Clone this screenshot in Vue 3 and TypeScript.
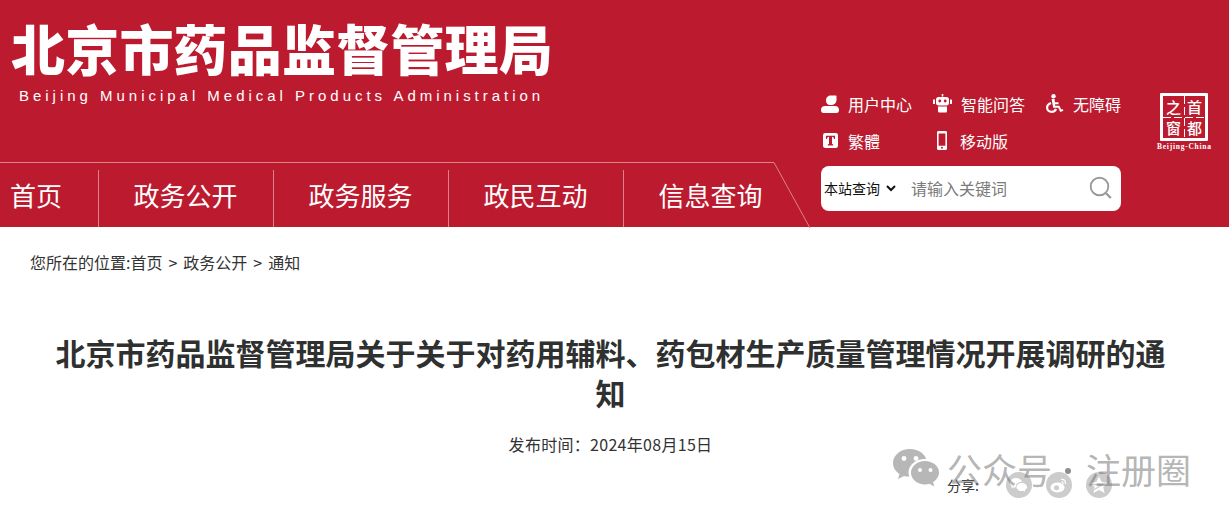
<script setup lang="ts">
const navItems: string[] = ['首页', '政务公开', '政务服务', '政民互动', '信息查询']
</script>

<template>
  <div class="page">
    <header class="header">
      <div class="brand-nav">
        <div class="brand">
          <div class="brand-cn">北京市药品监督管理局</div>
          <div class="brand-en">Beijing Municipal Medical Products Administration</div>
        </div>
        <nav class="nav">
          <svg class="nav-line" width="815" height="66" viewBox="0 0 815 66">
            <path d="M0 .5H774L810 66" fill="none" stroke="#d9838f" stroke-width="1" />
          </svg>
          <a v-for="item in navItems" :key="item" class="nav-item">{{ item }}</a>
        </nav>
      </div>
      <div class="tools-search">
        <div class="tools">
          <a class="tool">
            <svg class="tool-icon" width="18" height="18" viewBox="0 0 18 18"><path fill="#fff" d="M5 5.500C5 2.500 7 .5 10 .5h4.500c.8 0 1 .5 1 1.200V5c0 3-2.500 5-5.500 5H9C6.500 10 5 8 5 5.500ZM0 15c0-2.500 1.500-4 4-4h10c2.500 0 4 1.500 4 4 0 1.800-1 3-2.500 3h-13C1 18 0 16.800 0 15Z"/></svg>
            <span>用户中心</span>
          </a>
          <a class="tool">
            <svg class="tool-icon" width="19" height="19" viewBox="0 0 19 19"><path fill="#fff" d="M8.700 0h1.600v2.600H8.700zM5.500 3h8c1.500 0 2.500 1 2.500 2.500V9c0 1.500-1 2.500-2.500 2.500h-8C4 11.500 3 10.500 3 9V5.500C3 4 4 3 5.500 3ZM.5 5.500H2V10H.5C.2 10 0 9.700 0 9.300V6.200c0-.4.2-.7.500-.7Zm16.500 0h1.500c.3 0 .5.300.5.700v3.100c0 .4-.2.700-.5.700H17ZM5 12.500h9V17c0 1-.6 1.500-1.500 1.500h-6C5.600 18.500 5 18 5 17Z"/><circle cx="6.800" cy="7" r="1.400" fill="#bc1b2f"/><circle cx="12.200" cy="7" r="1.400" fill="#bc1b2f"/></svg>
            <span>智能问答</span>
          </a>
          <a class="tool">
            <svg class="tool-icon" width="18" height="19" viewBox="0 0 18 19"><circle cx="7.500" cy="2.200" r="2.200" fill="#fff"/><path fill="#fff" d="M5.600 5h3l.3 3.200h3.600v2H9l.2 1.500h4.200l1.800 3.800 1.400-.6.800 1.800-3.100 1.300-2.100-4.300H7.200Z"/><path fill="none" stroke="#fff" stroke-width="2.200" d="M5 9C2.500 9.900 1.100 11.600 1.100 13.500c0 2.700 2.100 4.400 4.500 4.400 2.100 0 3.800-1.200 4.400-3"/></svg>
            <span>无障碍</span>
          </a>
          <a class="tool">
            <svg class="tool-icon t-icon" width="15" height="15" viewBox="0 0 16 16"><rect width="16" height="16" rx="2.500" fill="#fff"/><path fill="#bc1b2f" d="M3.200 2.800h9.600v3.600h-1.100c-.2-1.500-.7-2.300-2.100-2.300v7.600l1.200.3v1.200H5.200V12l1.200-.3V4.100c-1.400 0-1.900.8-2.100 2.300H3.200Z"/></svg>
            <span>繁體</span>
          </a>
          <a class="tool">
            <svg class="tool-icon" width="18" height="19" viewBox="0 0 18 19"><path fill="#fff" fill-rule="evenodd" d="M5.500 0h7C13.400 0 14 .6 14 1.500v16c0 .9-.6 1.500-1.500 1.500h-7C4.600 19 4 18.400 4 17.500v-16C4 .6 4.600 0 5.500 0ZM5.600 2.400v12.400h6.800V2.400ZM9 15.800a1 1 0 1 0 0 2 1 1 0 0 0 0-2Z"/></svg>
            <span>移动版</span>
          </a>
        </div>
        <form class="search" @submit.prevent>
          <span class="scope">本站查询</span>
          <svg class="chevron" width="10" height="7" viewBox="0 0 10 7"><path d="M1 1l4 4 4-4" fill="none" stroke="#111" stroke-width="2"/></svg>
          <input class="search-input" type="text" placeholder="请输入关键词" />
          <svg class="search-icon" width="24" height="24" viewBox="0 0 24 24"><circle cx="10.500" cy="10.500" r="8.800" fill="none" stroke="#9a9a9a" stroke-width="1.900"/><path d="M16.800 17l5 5" stroke="#9a9a9a" stroke-width="2.400" fill="none"/></svg>
        </form>
      </div>
      <div class="seal-wrap">
        <div class="seal">
          <span>之</span><span>首</span><span>窗</span><span>都</span>
        </div>
        <div class="seal-en">Beijing-China</div>
      </div>
    </header>

    <main class="main">
      <div class="crumbs">您所在的位置:首页<i>&gt;</i>政务公开<i>&gt;</i>通知</div>
      <h1 class="title">北京市药品监督管理局关于关于对药用辅料、药包材生产质量管理情况开展调研的通知</h1>
      <div class="date">发布时间：2024年08月15日</div>
      <div class="share">
        <span class="share-label">分享:</span>
        <span class="share-icon">
          <svg width="26" height="26" viewBox="0 0 26 26"><path fill="#fff" d="M10 6c-3.600 0-6 2.300-6 5 0 1.500.8 2.800 2 3.600L5.500 16.500l2.300-1.200c.6.200 1.300.3 2 .3-.1-.3-.1-.6-.1-1 0-2.700 2.600-4.800 5.900-4.800h.6C15.500 7.800 13 6 10 6Z"/><path fill="#fff" d="M15.700 11c-3 0-5.200 1.800-5.200 4s2.200 4 5.200 4c.6 0 1.200-.1 1.700-.2l1.900 1-.5-1.600c1.300-.8 2.200-1.900 2.200-3.200 0-2.200-2.300-4-5.300-4Z"/></svg>
        </span>
        <span class="share-icon">
          <svg width="26" height="26" viewBox="0 0 26 26"><ellipse cx="11.500" cy="15.500" rx="7" ry="5" fill="#fff"/><circle cx="10.500" cy="15.800" r="2.500" fill="#ccc"/><path d="M15 7.500c3.200-.6 5.200 1.600 4.200 4.500M15.500 10c1.400-.2 1.800.6 1.400 2" fill="none" stroke="#fff" stroke-width="1.200"/></svg>
        </span>
        <span class="share-icon">
          <svg width="26" height="26" viewBox="0 0 26 26"><path fill="#fff" d="M13 4.500l2.700 5.600 6.100.8-4.500 4.200 1.200 6-5.500-3-5.500 3 1.200-6-4.500-4.200 6.100-.8Z"/><path fill="none" stroke="#ccc" stroke-width="1.300" d="M6 12.500h10.500L8.500 17.500"/></svg>
        </span>
      </div>
    </main>

    <div class="watermark">
      <svg width="46" height="40" viewBox="0 0 46 40"><path fill="#b4b4b4" d="M17 0C7.600 0 0 6.200 0 14c0 4.500 2.500 8.400 6.500 11l-1.500 5 6-3c1.800.5 3.500.7 5.300.8-.5-1.400-.8-2.800-.8-4.300C15.500 16 22.700 10 31.500 10c.6 0 1.200 0 1.700.1C31.300 4.300 24.800 0 17 0Z"/><path fill="#b4b4b4" d="M32 12c-7.700 0-14 5.200-14 11.700S24.300 35.400 32 35.400c1.600 0 3.100-.2 4.500-.7l4.800 2.800-1.300-4.500c3.700-2.200 6-5.800 6-9.800C46 17.200 39.700 12 32 12Z"/><circle cx="11" cy="9.500" r="2.400" fill="#fff"/><circle cx="23" cy="9.500" r="2.400" fill="#fff"/><circle cx="27" cy="21" r="2" fill="#fff"/><circle cx="37.500" cy="21" r="2" fill="#fff"/></svg>
      <span class="wm-text">公众号</span>
      <span class="wm-dot"></span>
      <span class="wm-text">注册圈</span>
    </div>
  </div>
</template>

<style scoped>
.page {
  position: relative;
  width: 1229px;
  height: 518px;
  overflow: hidden;
  background: #fff;
  color: #333;
  font-family: "Noto Sans CJK SC", "Liberation Sans", sans-serif;
}
.header {
  display: flex;
  height: 227px;
  background: #bc1b2f;
  color: #fff;
}
.brand-nav {
  display: flex;
  flex-direction: column;
  width: 821px;
  flex: none;
}
.brand {
  height: 162px;
  padding: 11px 0 0 11px;
  box-sizing: border-box;
}
.brand-cn {
  font-size: 54px;
  line-height: 74px;
  font-weight: 900;
  letter-spacing: .2px;
  white-space: nowrap;
}
.brand-en {
  margin: 1px 0 0 8px;
  font-family: "Liberation Sans", sans-serif;
  font-size: 15px;
  line-height: 20px;
  letter-spacing: 3.98px;
  white-space: nowrap;
}
.nav {
  position: relative;
  display: flex;
  height: 65px;
  box-sizing: border-box;
  padding-top: 8px;
}
.nav-line {
  position: absolute;
  left: 0;
  top: 0;
}
.nav-item {
  display: flex;
  align-items: center;
  justify-content: center;
  width: 175px;
  height: 57px;
  box-sizing: border-box;
  font-size: 26px;
  border-left: 1px solid #d9838f;
  padding: 0 1px 8px 0;
}
.nav-item:first-of-type {
  width: 98px;
  border-left: 0;
  justify-content: flex-start;
  padding-left: 10px;
}
.tools-search {
  width: 300px;
  flex: none;
  padding-top: 85px;
  box-sizing: border-box;
}
.tools {
  display: grid;
  grid-template-columns: 112px 113px 75px;
  grid-auto-rows: 37px;
  height: 74px;
}
.tool {
  display: flex;
  align-items: center;
  font-size: 16px;
  white-space: nowrap;
}
.tool-icon {
  flex: none;
  margin-right: 9px;
}
.t-icon {
  margin-left: 2px;
  margin-right: 10px;
}
.search {
  display: flex;
  align-items: center;
  width: 300px;
  height: 45px;
  margin-top: 7px;
  padding: 0 0 1px 3px;
  box-sizing: border-box;
  border-radius: 8px;
  background: #fff;
}
.scope {
  font-size: 14px;
  color: #111;
  white-space: nowrap;
}
.chevron {
  margin-left: 6px;
  flex: none;
}
.search-input {
  flex: 1;
  min-width: 0;
  margin-left: 15px;
  border: 0;
  padding: 0;
  outline: 0;
  background: transparent;
  font: inherit;
  font-size: 16px;
  color: #777;
}
.search-input::placeholder {
  color: #7b7b7b;
  opacity: 1;
}
.search-icon {
  flex: none;
  margin-right: 8px;
}
.seal-wrap {
  flex: none;
  width: 60px;
  margin-left: 36px;
  padding-top: 93px;
}
.seal {
  display: grid;
  grid-template-columns: 1fr 1fr;
  grid-template-rows: 1fr 1fr;
  width: 48px;
  height: 48px;
  margin-left: 3px;
  box-sizing: border-box;
  border: 3px solid #fff;
  border-radius: 1px;
  background:
    repeating-linear-gradient(#fff 0 8px, transparent 8px 11px) center / 1px 100% no-repeat,
    repeating-linear-gradient(90deg, #fff 0 8px, transparent 8px 11px) center / 100% 1px no-repeat;
  font-family: "Noto Sans CJK SC", serif;
  font-size: 15px;
  font-weight: 500;
  line-height: 21px;
  text-align: center;
}
.seal-en {
  margin-top: 1px;
  font-family: "Liberation Serif", serif;
  font-size: 7.500px;
  font-weight: 700;
  line-height: 10px;
  letter-spacing: .75px;
  white-space: nowrap;
}
.main {
  padding: 24px 58px 0 50px;
}
.crumbs {
  margin-left: -20px;
  font-size: 16px;
  line-height: 22px;
  color: #333;
  white-space: nowrap;
}
.crumbs i {
  margin: 0 6px;
  font-style: normal;
}
.title {
  margin: 59px 0 0;
  font-size: 30px;
  line-height: 40px;
  font-weight: 700;
  text-align: center;
  color: #2f3030;
}
.date {
  margin-top: 20px;
  font-size: 16px;
  line-height: 24px;
  letter-spacing: .3px;
  text-align: center;
  color: #333;
}
.share {
  display: flex;
  align-items: center;
  height: 28px;
  margin-top: 15px;
  margin-left: 897px;
}
.share-label {
  width: 59px;
  font-size: 14px;
  color: #333;
}
.share-icon {
  display: flex;
  width: 26px;
  height: 26px;
  margin-right: 14px;
  border-radius: 50%;
  background: #ccc;
}
.watermark {
  position: absolute;
  left: 893px;
  top: 449px;
  display: flex;
  align-items: center;
  height: 40px;
  color: rgba(110, 110, 110, .52);
}
.watermark svg {
  flex: none;
  opacity: .95;
}
.wm-text {
  margin-left: 8px;
  font-size: 35px;
  line-height: 40px;
  font-weight: 400;
  white-space: nowrap;
}
.wm-dot {
  width: 6px;
  height: 6px;
  margin: 4px 0 0 13px;
  border-radius: 50%;
  background: #8e8e8e;
}
.wm-dot + .wm-text {
  margin-left: 15px;
}
</style>
